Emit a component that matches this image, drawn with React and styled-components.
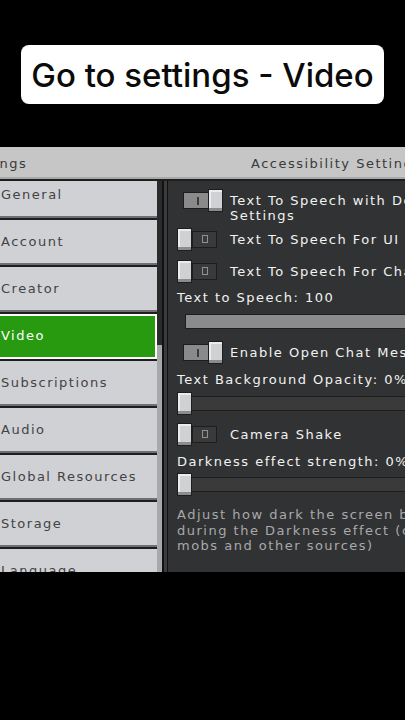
import styled, { createGlobalStyle } from 'styled-components';

const GlobalStyle = createGlobalStyle`
  html, body {
    margin: 0;
    padding: 0;
    background: #000;
  }
  body {
    width: 405px;
    height: 720px;
    overflow: hidden;
  }
`;

const Page = styled.div`
  width: 405px;
  height: 720px;
  background: #000;
  overflow: hidden;
  display: flex;
  flex-direction: column;
`;

const Caption = styled.div`
  flex-shrink: 0;
  margin: 45px 21px 0;
  height: 59px;
  background: #fff;
  border-radius: 8px;
  display: flex;
  align-items: center;
  justify-content: center;
  font-family: Inter, 'Noto Sans', sans-serif;
  font-weight: 500;
  font-size: 33px;
  color: #0b0b0b;
`;

// the game screen is wider than the video frame, so both sides are cut off
const Screen = styled.div`
  flex-shrink: 0;
  margin-top: 43px;
  margin-left: -40px;
  width: 640px;
  height: 425px;
  display: flex;
  flex-direction: column;
  font-family: 'DejaVu Sans', 'Liberation Sans', sans-serif;
  font-size: 13px;
  letter-spacing: 1.5px;
`;

const Header = styled.div`
  height: 32px;
  flex-shrink: 0;
  display: grid;
  grid-template-columns: 208px 1fr;
  align-items: center;
  background: #c6c6c6;
  box-shadow: inset 0 -2px 0 #a9a9a9;
  border-bottom: 2px solid #1e1e1f;
  color: #3a3a3b;
  white-space: nowrap;
`;

const HeaderTitle = styled.div`
  padding-left: ${(p) => p.$indent}px;
`;

const Body = styled.div`
  flex: 1;
  display: flex;
  overflow: hidden;
`;

const Sidebar = styled.div`
  width: 197px;
  flex-shrink: 0;
  background: #1e1e1f;
  overflow: hidden;
`;

const SideList = styled.div`
  margin-top: -8px;
  display: flex;
  flex-direction: column;
  gap: 2px;
`;

const SideItem = styled.div`
  height: 45px;
  flex-shrink: 0;
  box-sizing: border-box;
  padding: 0 0 3px 41px;
  display: flex;
  align-items: center;
  white-space: nowrap;
  background: ${(p) => (p.$active ? '#279a10' : '#d0d1d4')};
  color: ${(p) => (p.$active ? '#ffffff' : '#434345')};
  box-shadow: ${(p) =>
    p.$active ? 'inset 0 0 0 2px #ffffff' : 'inset 0 -2px 0 #6f6f71'};
`;

const ScrollTrack = styled.div`
  width: 5px;
  flex-shrink: 0;
  background: #2b2b2c;
  display: flex;
  flex-direction: column;
`;

const ScrollThumb = styled.div`
  margin-top: 164px;
  flex: 1;
  background: #a8a8aa;
`;

const Divider = styled.div`
  width: 3px;
  flex-shrink: 0;
  background: #3c3c3d;
  border-left: 2px solid #111;
  border-right: 1px solid #111;
`;

const Panel = styled.div`
  flex: 1;
  background: #313233;
  padding: 8px 0 0 9px;
  display: flex;
  flex-direction: column;
  color: #f2f2f2;
  overflow: hidden;
  line-height: 15.5px;
  white-space: nowrap;
`;

const ToggleRow = styled.div`
  margin-top: ${(p) => p.$mt || 0}px;
  display: flex;
  align-items: flex-start;
  gap: 7px;
`;

const Switch = styled.div`
  width: 46px;
  height: 23px;
  flex-shrink: 0;
  display: flex;
  align-items: center;
  justify-content: ${(p) => (p.$on ? 'flex-end' : 'flex-start')};
`;

const Knob = styled.div`
  width: 15px;
  height: 23px;
  flex-shrink: 0;
  box-sizing: border-box;
  background: #d0d1d4;
  border: 1px solid #1e1e1f;
  box-shadow: inset 0 -3px 0 #8c8c8e, inset 2px 2px 0 #ececee;
  position: relative;
  z-index: 1;
`;

const Track = styled.div`
  width: ${(p) => (p.$on ? 27 : 25)}px;
  height: 17px;
  box-sizing: border-box;
  margin-right: ${(p) => (p.$on ? -2 : 0)}px;
  border: 1px solid #1e1e1f;
  background: ${(p) => (p.$on ? '#8a8a8b' : '#3a3a3b')};
  display: flex;
  align-items: center;
  justify-content: center;
`;

const OnMark = styled.span`
  width: 2px;
  height: 8px;
  margin-left: 3px;
  background: #3c3c3d;
`;

const OffMark = styled.span`
  width: 4px;
  height: 6px;
  border: 1px solid #909092;
`;

const ToggleLabel = styled.div`
  padding-top: 3.75px;
`;

const FieldLabel = styled.div`
  margin-top: ${(p) => p.$mt || 0}px;
`;

const Slider = styled.div`
  margin-top: ${(p) => p.$mt || 0}px;
  position: relative;
  height: 23px;
  display: flex;
  align-items: center;
`;

const SliderTrack = styled.div`
  margin-left: 8px;
  flex: 1;
  height: 15px;
  box-sizing: border-box;
  border: 1px solid #1e1e1f;
  background: ${(p) => (p.$filled ? '#8b8b8c' : '#3a3a3b')};
`;

const SliderKnob = styled(Knob)`
  position: absolute;
  top: 0;
`;

const Description = styled.div`
  margin-top: ${(p) => p.$mt || 0}px;
  color: #a9a9ab;
`;

const MENU = [
  'General',
  'Account',
  'Creator',
  'Video',
  'Subscriptions',
  'Audio',
  'Global Resources',
  'Storage',
  'Language',
];

const Toggle = ({ on, mt, children }) => (
  <ToggleRow $mt={mt}>
    <Switch $on={on}>
      {on ? (
        <>
          <Track $on>
            <OnMark />
          </Track>
          <Knob />
        </>
      ) : (
        <>
          <Knob />
          <Track>
            <OffMark />
          </Track>
        </>
      )}
    </Switch>
    <ToggleLabel>{children}</ToggleLabel>
  </ToggleRow>
);

const Range = ({ value, mt }) => (
  <Slider $mt={mt}>
    <SliderTrack $filled={value > 0} />
    <SliderKnob style={{ left: `calc(${value}% - ${value * 0.15}px)` }} />
  </Slider>
);

const App = () => (
  <>
    <GlobalStyle />
    <Page>
      <Caption>Go to settings - Video</Caption>
      <Screen>
        <Header>
          <HeaderTitle $indent={2}>Settings</HeaderTitle>
          <HeaderTitle $indent={83}>Accessibility Settings</HeaderTitle>
        </Header>
        <Body>
          <Sidebar>
            <SideList>
              {MENU.map((name) => (
                <SideItem key={name} $active={name === 'Video'}>
                  {name}
                </SideItem>
              ))}
            </SideList>
          </Sidebar>
          <ScrollTrack>
            <ScrollThumb />
          </ScrollTrack>
          <Divider />
          <Panel>
            <Toggle on>
              Text To Speech with Default
              <br />
              Settings
            </Toggle>
            <Toggle mt={4}>Text To Speech For UI</Toggle>
            <Toggle mt={9}>Text To Speech For Chat</Toggle>
            <FieldLabel $mt={7}>Text to Speech: 100</FieldLabel>
            <Range value={100} mt={5} />
            <Toggle on mt={8}>
              Enable Open Chat Message Text To Speech
            </Toggle>
            <FieldLabel $mt={8}>Text Background Opacity: 0%</FieldLabel>
            <Range value={0} mt={4} />
            <Toggle mt={8}>Camera Shake</Toggle>
            <FieldLabel $mt={8}>Darkness effect strength: 0%</FieldLabel>
            <Range value={0} mt={4} />
            <Description $mt={11}>
              Adjust how dark the screen becomes
              <br />
              during the Darkness effect (caused by
              <br />
              mobs and other sources)
            </Description>
          </Panel>
        </Body>
      </Screen>
    </Page>
  </>
);

export default App;
